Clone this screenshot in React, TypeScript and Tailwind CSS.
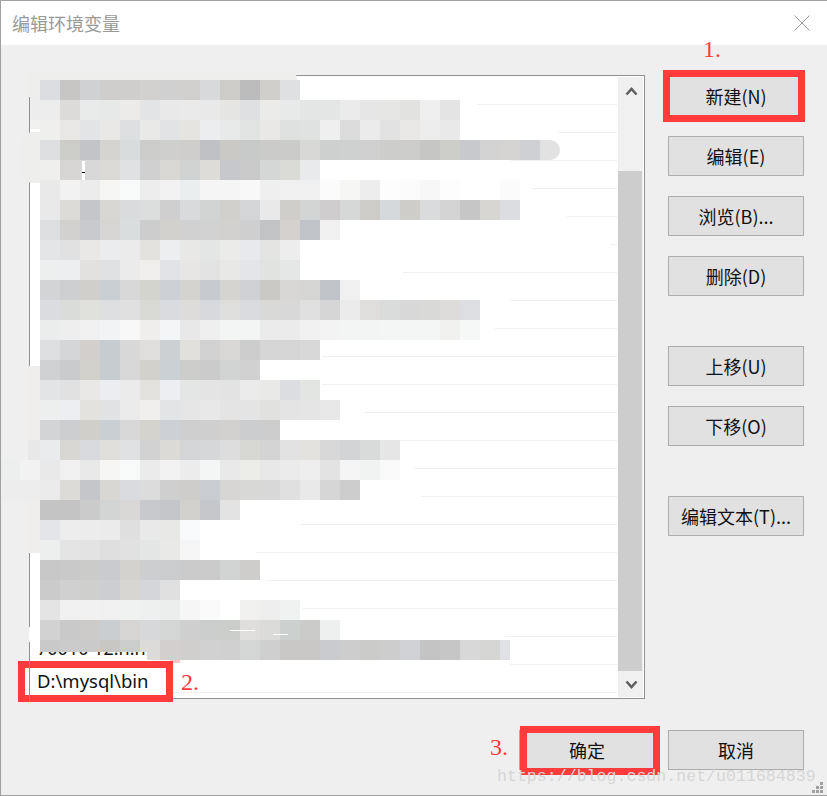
const cjk = "font-['Noto_Sans_CJK_SC','Noto_Sans',sans-serif]";

// x where the separator line of each list row becomes visible (the rest is painted out)
const lineStarts = [477, 558, 511, 532, 567, 610, 403, 510, 495, 322, 322, 365, 375, 414, 421, 301, 256, 267, 303, 505, 510, 173];

// blurred out rows, 20px cells starting at x=40 unless noted
const mosaic: string[] = [
  "dcdde0 c8c6c4 d0d1d3 d0cecc cfcecd d2d1d0 d0d0d1 d2d0ce d8d9db cdccc9 bbbcbb d1cfcc dfe0e2",
  "ededed dcdbd9 e9eaea e7e8e8 ecebe9 e3e4e5 e9e9ea eaeaea e9e9ea e5e5e3 dfe0e2 ebebe9 e8e9e9 e4e6e5 e4e5e5 ebebeb e6e6e7 e6e6e5 e2e2e0 efefef e4e4e5",
  "efefee e8e7e5 e3e4e6 e9e8e6 dddfe1 e9e9e7 e2e3e5 e6e4e1 ecedef e8e9e9 e2e4e3 e9e8e7 dfe0e0 e0e2e1 efefef dcdcdc ebebec e2e2e2 e8e7e5 ededed e9e9ea",
  "dcdee0 ccccc9 c3c4c7 d5d4d0 d8dcdd ccccca cfcfcd cfcecd bfc1c4 cac9c6 c8cac9 cbcbca cbcbc9 d8d9d6 ced0cf cfd1d0 cfd0cf cdcecb cdcdcb c6c7c4 cdcdc9 c8c9cd d3d3d3 d5d4d2 ced0d3 e2e2e2",
  "efefed d6d5d3 d8d8d9 dcdad7 dfe1e2 d0d0d0 d9d8d5 d0d3d2 dddcd9 c7c8cb cacaca d5d7d7 dadad7 e9eaec",
  "e9e9e9 f2f2f2 ececec f6f6f4 f8f9f9 ededed f2f2f2 ebeeee f5f5f5 f5f5f5 f8f8f8 efefef f0f0f0 f0f0f0 fbfbfb f6f6f4 ededee fdfdfd fbfbfb f7f7f7 fdfdfd ffffff ffffff fbfbfb",
  "e9e9e9 dcdbd8 c4c6c9 d9d7d3 d9dbdc dcdddd cfcfcf d9dadb d2d4d3 d1d0cd d3d5d7 e9e9e9 cfcecb d3d4d4 cfcdcd d6d8d8 cdccc9 d5d9db cfcdca dadbdd d4d4d5 c6c6c6 d8d6d3 dcdde0",
  "dcdee0 d3d1cf c9cacd d7d5d3 d9dddd cdcdcd d2d1ce d1d1d1 d2d2d2 d2d1cf cfcfd0 c2c3c4 d5d1ce c0c4c8 f0f0f0",
  "e3e5e7 e1e1e1 e9e8e6 ebecee ebebeb e3e2df eceef0 e8e8e6 e4e5e5 ebebe9 e8e9ec e4e5e3 ededed",
  "ecefee eceef0 e2e1df dfe1e3 ebebeb f0efed e1e3e6 e7e6e4 e3e3e3 e8e8e6 e3e5e8 e1e3e0 e5e7e6",
  "d2d4d6 cdcfd1 d0cfcb cacfd3 d8d8d8 d4d4cf cdd1d5 d4d3d0 c7cace d5d4d1 cfd1d4 cac9c6 d8d7d5 d5d5d3 c0c4c8 f0f0f0",
  "dadce0 dadcd9 e0e0dd dcdee0 e0e0e0 d9d9d5 d9dbde dddcda d7d9dc dededc d9dbde d9d9d8 d8d8d8 e0e0e0 d5d5d5 ebebeb dfdedc dadcdb d8d8d8 d9d9d8 dedcda dddee1",
  "ebeded eeeeee f0f0f0 f2f3f5 f8f8f8 efeeec f3f5f7 e8e8e9 efefef f3f4f4 f3f4f4 ebebeb ebebeb f1f1f1 f3f3f3 f3f5f4 f3f5f5 f4f5f5 f4f5f5 f4f5f5 f0f0ee f6f8f7",
  "dcdee0 d5d6d8 d2cfcc c6cccf d8d8d8 dfdedc cdd0d3 e1e0dd d2d2d2 d9d8d6 cccccc d5d5d5 d5d5d5 d8d8d8",
  "cfd1d3 c9cbcd d2d1cc c6ccd0 d8d8d8 d2d1cc cbd0d4 cccccb cbcbcb d1d4d3 d1d1d1",
  "e2e4e6 e1e1e1 e9e8e6 ebedf0 ebebeb e3e2df eceef1 e4e5e5 e4e4e4 e3e3e3 ebebeb e9e9e7 dcdde0 e3e5e3",
  "edefee edeef1 e3e2df e0e2e4 ebebeb f0efed e2e4e6 e7e6e6 e8e8e8 e4e4e4 e4e4e4 e1e1df e4e4e4 e5e5e5 e8e8e8",
  "d2d4d6 cccecf d0cfca cacfd3 d8d8d8 d4d3ce cdd1d5 cfcfcf cfcfcf d2d1cf cccdcf cdcdcd",
  "e9ebec d8d7d4 d8dadd dfdedb dfe1e3 d2d2d2 dbdad7 d4d5d6 d5d7d9 dddddd d7d7d4 d4d4d4 e2e2e2 e3e2df d8d8d8 d2d4d6 d8dbd9 e6e6e6",
  "edefee f2f2f2 e9e9e9 f0f0f0 e9e9e9 f6f6f4 f8f9f9 ebebeb f2f2f2 ececec f3f6f5 e9e9e9 ecece9 e8e8e8 ebebeb eeeeee e3e3e3 f5f5f5 f1f3f2 f9f9f9",
  "ebebeb dcdbd8 c4c6c9 d9d7d3 d9dbde dcdcdc cfcfcf cfcdcb c9cdd1 d6d5d3 d8d8d6 d8d8d8 e0e0e0 e9e9e9 d6d6d6 cdcdcd",
  "c4c4c4 c4c4c4 cbcbcb d2d5d4 d9d8d6 c8c9cc c5c6ca d2d1ce c6c7ca e3e3e3",
  "e4e5e8 ededee ececec ebebeb dfdfdf e9e9e9 e8e8e6 f9fafc",
  "ecefee e4e4e4 e3e3e3 dfdfdf e1e1e1 e4e6e6 e9e9e7 f6f6f6",
  "c8c8c8 c9c9c9 cbcbc9 c9cbce d3d2cf cdced0 cbcccd cbcbcb cbcbcb d2d4d3 cecdcb",
  "cbcbcb d0d0d0 cfcfcd ccced1 d8d6d3 d4d6d9 e0e0e0",
  "e4e4e4 f0f0f0 f1f1f1 f0f0f0 f0f2f1 eef0ef ebeeed f6f6f6 fafafa ffffff f0f0ee eeeeee f0f2f1",
  "d2d2d2 c9c9c9 cccbc9 cbced1 d6d5d3 d6d8da d4d6d6 cfcfcf cbcdcd cbcdcb dfdedc dbdbda ccd0ce cbcbc9 eef0ef",
  "c9c9c9 cbcbcb cacaca c9c7c4 cbcdcc dcdbd9 d2cfce d0cfce d1d1d1 cfd0cf d4d6d6 cfcfcf c9c8c6 c9c8c6 c9cbcf cdcdcd cbcbc9 cdcdcd d1d2d5 c4c4c4 c6c6c6 d8d8d8 d5d5d3 e0e1e4",
];

function Btn({ label }: { label: string }) {
  return (
    <button className={`w-[136px] h-10 shrink-0 bg-[#e1e1e1] border border-[#adadad] text-[18px] leading-none text-[#111] ${cjk}`}>
      {label}
    </button>
  );
}

function Chevron({ up }: { up?: boolean }) {
  return (
    <svg width="13" height="11" viewBox="0 0 13 11" className="text-[#606060]">
      <polyline
        points={up ? "1.5,8.5 6.5,3 11.5,8.5" : "1.5,2.5 6.5,8 11.5,2.5"}
        fill="none"
        stroke="currentColor"
        strokeWidth="2.6"
      />
    </svg>
  );
}

function Mark({ children, className }: { children: string; className: string }) {
  return (
    <span className={`absolute text-[#ff3b3b] text-[24px] leading-none font-['Liberation_Serif',serif] ${className}`}>
      {children}
    </span>
  );
}

export default function App() {
  return (
    <div className={`relative w-[827px] h-[796px] overflow-hidden flex flex-col bg-[#efefef] border-t border-l border-b border-[#a0a0a0] ${cjk}`}>
      <div className="h-11 shrink-0 bg-white flex items-center justify-between pl-[11px] pr-[17px]">
        <span className="text-[18px] text-[#999999]">编辑环境变量</span>
        <svg width="16" height="16" viewBox="0 0 16 16" className="text-[#999999]">
          <path d="M0.5 0.5 L15.5 15.5 M15.5 0.5 L0.5 15.5" stroke="currentColor" strokeWidth="1" fill="none" />
        </svg>
      </div>

      <div className="flex-1 flex flex-col pt-[30px]">
        <div className="flex pl-7">
          <div className="w-[616px] h-[624px] flex bg-white border border-[#8f8f94] py-px">
            <div className="w-[588px] flex flex-col">
              {lineStarts.map((x, i) => (
                <div key={i} className="h-7 shrink-0 flex flex-col justify-end pr-px">
                  <div className="h-px bg-[#f0f0f0]" style={{ marginLeft: x - 30 }} />
                </div>
              ))}
            </div>
            <div className="w-[25px] flex flex-col bg-[#f0f0f0]">
              <div className="h-[94px] flex justify-center items-start pt-[9px] pl-px"><Chevron up /></div>
              <div className="flex-1 w-6 bg-[#cdcdcd]" />
              <div className="h-[26px] flex justify-center items-center pl-px"><Chevron /></div>
            </div>
          </div>

          <div className="ml-[23px] pt-px flex flex-col gap-[50px]">
            <div className="flex flex-col gap-5">
              <Btn label="新建(N)" />
              <Btn label="编辑(E)" />
              <Btn label="浏览(B)..." />
              <Btn label="删除(D)" />
            </div>
            <div className="flex flex-col gap-5">
              <Btn label="上移(U)" />
              <Btn label="下移(O)" />
            </div>
            <Btn label="编辑文本(T)..." />
          </div>
        </div>

        <div className="flex justify-end gap-[13px] pr-[23px] mt-[31px]">
          <Btn label="确定" />
          <Btn label="取消" />
        </div>
      </div>

      {/* smudges painted over the list frame */}
      <div className="absolute left-[28px] top-[70px] w-[268px] h-[10px] rounded-t-[8px] bg-[#eeeeec]" />
      <div className="absolute left-[26px] top-[72px] w-[13px] h-[24px] bg-[#eeeeec]" />
      <div className="absolute left-[29px] top-[96px] w-[10px] h-[24px] bg-[#ededed]" />
      <div className="absolute left-[29px] top-[119px] w-[10px] h-[9px] bg-[#f0f0ee]" />
      <div className="absolute left-[20px] top-[131px] w-[19px] h-[51px] rounded-l-[12px] bg-[#eeeeec]" />
      <div className="absolute left-[27px] top-[365px] w-[12px] h-[187px] bg-[#efeeec]" />
      <div className="absolute left-[28px] top-[626px] w-[2px] h-[15px] bg-white" />

      <div className="absolute left-0 top-[79px] flex flex-col items-start">
        {mosaic.map((row, r) => (
          <div
            key={r}
            className={r === 3 ? "flex h-5 rounded-r-[12px] overflow-hidden" : "flex h-5 overflow-hidden"}
            style={{ marginLeft: r === 19 ? -1 : 39, width: r === 28 ? 470 : undefined }}
          >
            {row.split(" ").map((c, i) => (
              <div key={i} className="w-5 h-5 shrink-0" style={{ backgroundColor: `#${c}` }} />
            ))}
          </div>
        ))}
      </div>

      <div className="absolute left-0 top-[479px] w-[39px] h-5 bg-[#ededed]" />
      <div className="absolute left-[27px] top-[439px] w-[12px] h-5 bg-[#e8e8e8]" />
      <div className="absolute left-[81px] top-[160px] w-[3px] h-[19px] bg-white" />
      <div className="absolute left-[81px] top-[171px] w-[3px] h-px bg-black" />
      <div className="absolute left-[229px] top-[629px] w-[25px] h-px bg-white" />
      <div className="absolute left-[272px] top-[633px] w-[15px] h-px bg-white" />
      <div className="absolute left-[169px] top-[659px] w-[10px] h-[3px] bg-[#fcc4c4]" />

      {/* what is left of the row that the blur cuts through */}
      <div className="absolute left-[32px] top-[651px] w-[114px] h-2 bg-white overflow-hidden">
        <div className="-mt-[14px] pl-1 text-[18px] leading-[20px] whitespace-nowrap text-[#111] font-['Noto_Sans',sans-serif]">
          70010 12.n.n.D
        </div>
      </div>

      {/* red annotations */}
      <div className="absolute left-[662px] top-[69px] w-[142px] h-[52px] border-[7px] border-[#ff3b3b]" />
      <div className="absolute left-[519px] top-[725px] w-[140px] h-[49px] border-[7px] border-[#ff3b3b]" />
      <div className="absolute left-[17px] top-[660px] w-[155px] h-[41px] border-[7px] border-[#ff3b3b] bg-white">
        <div className="absolute left-[4px] -top-[7px] h-[41px] w-px bg-[#8f8f94]" />
        <span className="absolute left-[12px] top-[1px] text-[18.5px] leading-[24px] whitespace-nowrap text-[#111] font-['Noto_Sans',sans-serif]">
          D:\mysql\bin
        </span>
      </div>
      <Mark className="left-[702px] top-[36px]">1.</Mark>
      <Mark className="left-[180px] top-[669px]">2.</Mark>
      <Mark className="left-[489px] top-[734px]">3.</Mark>

      <span className="absolute left-[496px] top-[766px] text-[16.6px] leading-5 whitespace-nowrap text-[#d6d6d6] font-['Liberation_Mono',monospace]">
        https://blog.csdn.net/u011684839
      </span>

      <svg width="12" height="12" viewBox="0 0 12 12" className="absolute left-[811px] top-[781px] text-[#a0a0a0]">
        <g fill="currentColor">
          <rect x="8" y="0" width="3" height="3" />
          <rect x="4" y="4" width="3" height="3" />
          <rect x="8" y="4" width="3" height="3" />
          <rect x="0" y="8" width="3" height="3" />
          <rect x="4" y="8" width="3" height="3" />
          <rect x="8" y="8" width="3" height="3" />
        </g>
      </svg>
    </div>
  );
}
